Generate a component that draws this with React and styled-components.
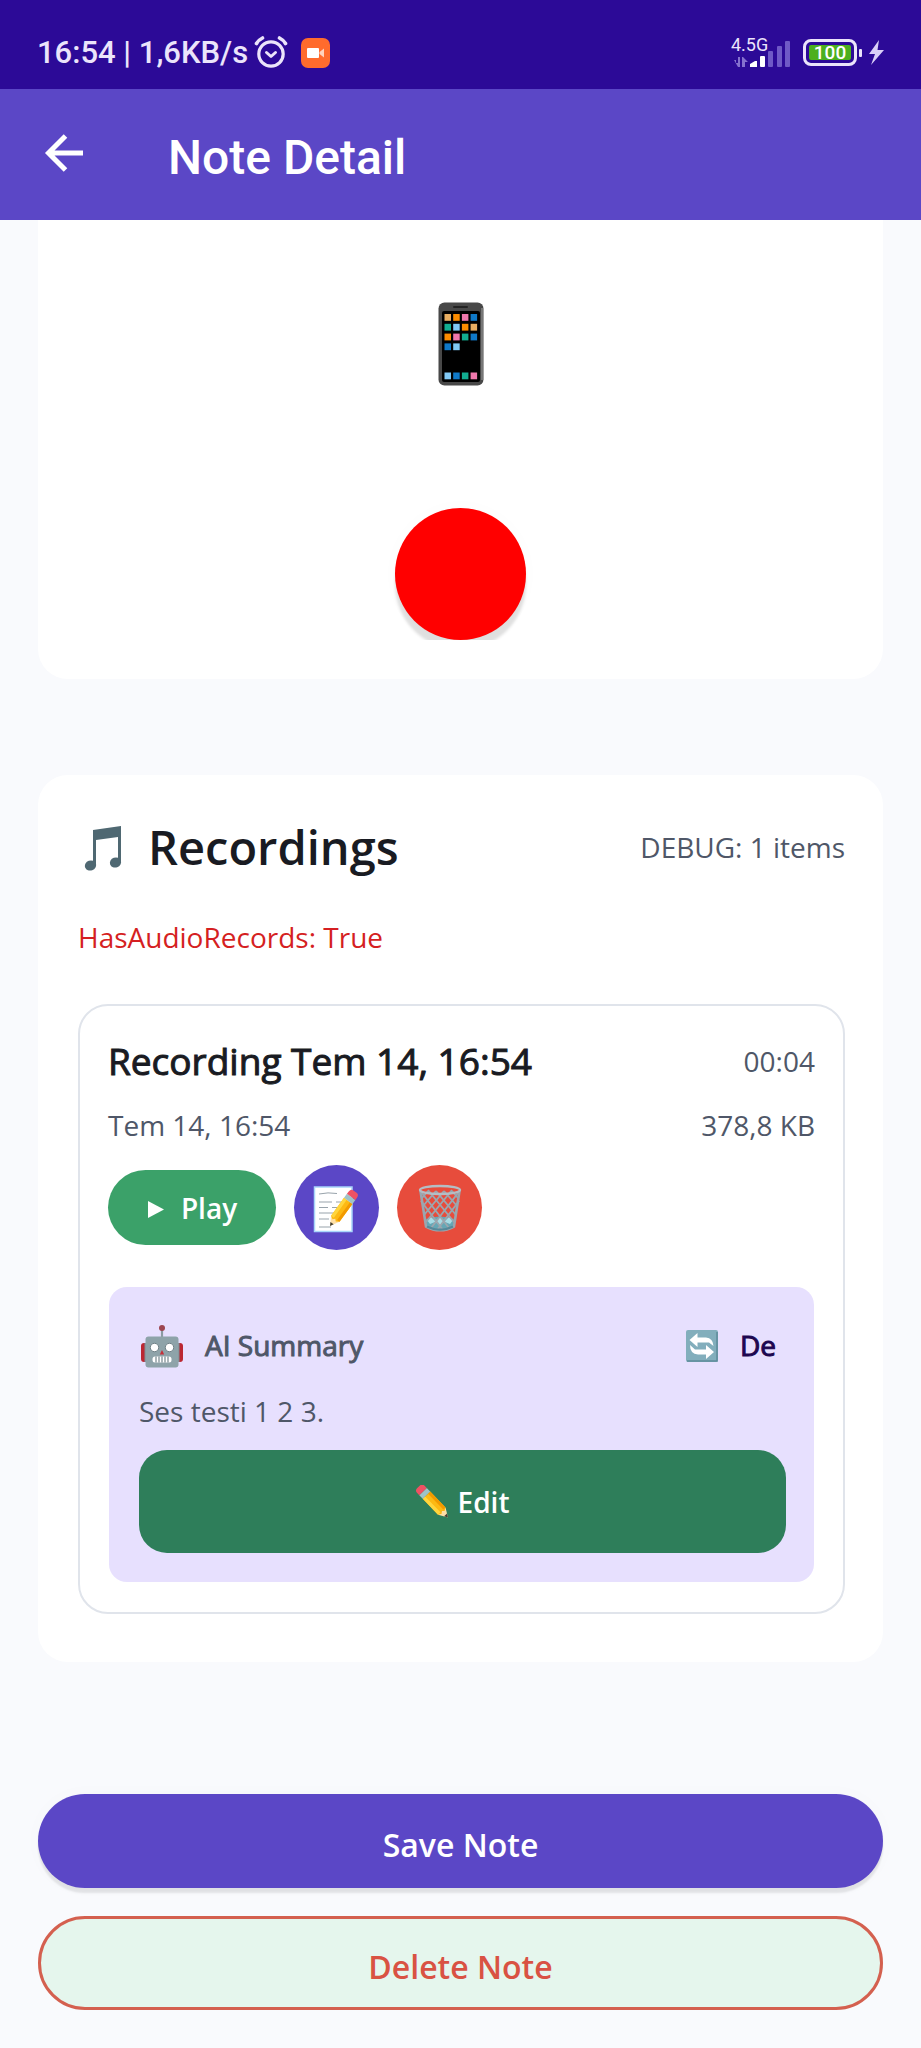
import React from 'react';
import styled, { createGlobalStyle } from 'styled-components';

const color = {
  status: '#2c0a97',
  primary: '#5b47c6',
  page: '#f9fafd',
  ink: '#191b22',
  muted: '#4f5768',
  danger: '#e74c3c',
};

const GlobalStyle = createGlobalStyle`
  *, *::before, *::after { box-sizing: border-box; }
  body {
    margin: 0;
    background: ${color.page};
    font-family: "Open Sans", "Noto Sans", sans-serif;
    color: ${color.ink};
  }
  h1, h2, h3, p { margin: 0; }
  button { font-family: inherit; border: 0; padding: 0; cursor: pointer; }
  svg { display: block; flex: none; }
`;

const StatusBar = styled.div`
  display: flex;
  justify-content: space-between;
  height: 89px;
  padding: 16px 36px 0 37px;
  background: ${color.status};
  color: #ebe4fb;
  font-family: Roboto, sans-serif;
`;

const StatusGroup = styled.div`
  display: flex;
  align-items: center;
  gap: 6px;
`;

const StatusIcons = styled(StatusGroup)`
  gap: 13px;
`;

const Clock = styled.span`
  font-size: 31px;
  line-height: 40px;
  font-weight: 500;
`;

const Signal = styled.div`
  position: relative;
  margin-right: 6px;
`;

const NetworkLabel = styled.span`
  position: absolute;
  left: 0;
  top: 0;
  font-size: 18px;
  line-height: 16px;
`;

const Battery = styled.div`
  display: flex;
  align-items: center;
  gap: 2px;
  &::after {
    content: '';
    width: 3px;
    height: 8px;
    border-radius: 1px;
    background: #ebe4fb;
  }
`;

const BatteryShell = styled.div`
  width: 54px;
  height: 27px;
  padding: 3px;
  border: 3px solid #ebe4fb;
  border-radius: 8px;
`;

const BatteryLevel = styled.div`
  height: 15px;
  border-radius: 2px;
  background: #4caf1e;
  color: #fff;
  font-size: 19px;
  line-height: 16px;
  font-weight: 500;
  text-align: center;
`;

const AppBar = styled.header`
  display: flex;
  align-items: center;
  gap: 78px;
  height: 131px;
  padding: 0 38px;
  background: ${color.primary};
  color: #fff;
`;

const BackButton = styled.button`
  background: none;
  color: inherit;
  padding: 0 0 4px;
`;

const ScreenTitle = styled.h1`
  font-family: Roboto, sans-serif;
  font-size: 48px;
  line-height: 56px;
  font-weight: 500;
  padding-top: 6px;
`;

const Content = styled.main`
  padding: 0 38px 38px;
`;

const RecorderCard = styled.section`
  display: flex;
  flex-direction: column;
  align-items: center;
  padding: 82px 40px 39px;
  background: #fff;
  border-radius: 0 0 30px 30px;
`;

const RecordSlot = styled.div`
  display: flex;
  justify-content: center;
  width: 180px;
  padding-top: 24px;
  margin-top: 98px;
  overflow: hidden;
`;

const RecordButton = styled.button`
  width: 131px;
  height: 132px;
  border-radius: 50%;
  background: #f00;
  box-shadow: 0 10px 3px rgba(0, 0, 0, 0.12), 0 0 18px rgba(0, 0, 0, 0.02);
`;

const RecordingsCard = styled.section`
  margin-top: 96px;
  padding: 40px 38px 48px 40px;
  background: #fff;
  border-radius: 30px;
`;

const Row = styled.div`
  display: flex;
  align-items: center;
  justify-content: space-between;
`;

const TitleGroup = styled.div`
  display: flex;
  align-items: center;
  gap: ${(p) => p.$gap || 20}px;
`;

const SectionTitle = styled.h2`
  font-size: 47px;
  line-height: 64px;
  font-weight: 600;
`;

const Caption = styled.p`
  font-size: 28px;
  line-height: 40px;
  color: ${(p) => p.$color || color.muted};
`;

const DebugFlag = styled(Caption)`
  margin-top: 38px;
`;

const Recording = styled.article`
  margin-top: 47px;
  padding: 28px 28px 30px;
  border: 2px solid #e0e4eb;
  border-radius: 30px;
`;

const RecordingTitle = styled.h3`
  font-size: 37px;
  line-height: 54px;
  font-weight: 400;
  -webkit-text-stroke: 1px currentColor;
`;

const MetaRow = styled(Row)`
  margin-top: 17px;
`;

const Actions = styled.div`
  display: flex;
  align-items: center;
  gap: 18px;
  margin-top: 20px;
`;

const PlayButton = styled.button`
  display: flex;
  align-items: center;
  justify-content: center;
  gap: 16px;
  width: 168px;
  height: 75px;
  border-radius: 38px;
  background: #3ba169;
  color: #fff;
  font-size: 28px;
  line-height: 40px;
  font-weight: 600;
`;

const RoundButton = styled.button`
  display: flex;
  align-items: center;
  justify-content: center;
  width: 85px;
  height: 85px;
  border-radius: 50%;
  background: ${(p) => p.$bg};
`;

const Summary = styled.section`
  margin: 37px 1px 0;
  padding: 28px 28px 29px 30px;
  border-radius: 18px;
  background: #e7e0fe;
`;

const SummaryHead = styled(Row)`
  height: 60px;
  padding-right: 10px;
`;

const SummaryTitle = styled.h3`
  font-size: 28px;
  line-height: 40px;
  font-weight: 400;
  color: ${color.muted};
  -webkit-text-stroke: 1px currentColor;
`;

const TextButton = styled.button`
  display: flex;
  align-items: center;
  gap: 20px;
  background: none;
  color: #1d0750;
  font-size: 28px;
  line-height: 40px;
  -webkit-text-stroke: 1px currentColor;
`;

const SummaryText = styled(Caption)`
  margin-top: 16px;
`;

const EditButton = styled.button`
  display: flex;
  align-items: center;
  justify-content: center;
  gap: 8px;
  width: 100%;
  height: 103px;
  margin-top: 19px;
  border-radius: 28px;
  background: #2e7e5a;
  color: #fff;
  font-size: 28px;
  line-height: 40px;
  font-weight: 600;
`;

const Footer = styled.div`
  display: flex;
  flex-direction: column;
  gap: 28px;
  margin-top: 132px;
`;

const WideButton = styled.button`
  height: 94px;
  padding-top: 8px;
  border-radius: 47px;
  font-size: 32px;
  line-height: 44px;
  font-weight: 600;
`;

const SaveButton = styled(WideButton)`
  background: ${color.primary};
  color: #fff;
  box-shadow: 0 5px 2px rgba(0, 0, 0, 0.09), 0 0 20px rgba(0, 0, 0, 0.02);
`;

const DeleteButton = styled(WideButton)`
  background: #e5f6ed;
  border: 3px solid #d4604f;
  color: #d95243;
`;

const AlarmIcon = () => (
  <svg width="34" height="34" viewBox="0 0 34 34" fill="none" stroke="#ebe4fb" strokeLinecap="round">
    <circle cx="17" cy="18" r="12.2" strokeWidth="3.2" />
    <path d="M12.5 16.5 17 20.5 21.5 16.5" strokeWidth="3" strokeLinejoin="round" />
    <path d="M2.500 7.500Q4.500 4 8.500 2M31.500 7.500Q29.500 4 25.500 2" strokeWidth="3.600" />
  </svg>
);

const CameraIcon = () => (
  <svg width="29" height="30" viewBox="0 0 29 30">
    <rect width="29" height="30" rx="7" fill="#ff6b2d" />
    <rect x="6" y="10" width="12" height="10" rx="1" fill="#fff" />
    <path d="M18.500 14 23 10.500V19.500L18.500 16z" fill="#ffd2bd" />
  </svg>
);

const SignalIcon = () => (
  <svg width="60" height="32" viewBox="0 0 60 32">
    <path d="M3 23h2v3h2v-6h2v10h-2zM11 20h1l5 5h-3v5h-3z" fill="#8571ce" />
    <path d="M19 30v-3l5-3h2v6z" fill="#fff" />
    <rect x="29" y="19" width="5" height="11" rx="1" fill="#fff" />
    <rect x="37" y="14" width="5" height="16" rx="1" fill="#6f59c6" />
    <rect x="46" y="9" width="5" height="21" rx="1" fill="#6f59c6" />
    <rect x="54" y="4" width="5" height="26" rx="1" fill="#6f59c6" />
  </svg>
);

const BoltIcon = () => (
  <svg width="17" height="25" viewBox="0 0 17 25">
    <path d="M11 0 1 14h6L3 25 16 10H9.500z" fill="#d9cff8" />
  </svg>
);

const BackIcon = () => (
  <svg width="52" height="44" viewBox="0 0 52 44" fill="none" stroke="currentColor" strokeWidth="5">
    <path d="M45 22H11M27.500 5 10.500 22 27.500 39" />
  </svg>
);

const appColors = ['#e8ae62', '#fb8c00', '#f178ad', '#0f79c8', '#12ae91', '#81c9f5'];
const apps = [[0, 1, 2, 3], [4, 5, 1, 0], [1, 2, 4, 3], [3, 5]];
const dock = [5, 3, 4, 2];

const PhoneIcon = () => (
  <svg width="46" height="84" viewBox="0 0 46 84">
    <rect x="0.500" y="0.500" width="45" height="83" rx="6" fill="#484848" />
    <rect x="43" y="6" width="2" height="72" fill="#777" />
    <rect x="15" y="4" width="15" height="2" rx="1" fill="#222" />
    <rect x="4" y="9" width="38" height="71" rx="2" fill="#000" />
    {apps.map((row, y) =>
      row.map((c, x) => (
        <rect key={`${y}${x}`} x={6.5 + x * 8.7} y={12 + y * 9.8} width="6.500" height="6.800" fill={appColors[c]} />
      ))
    )}
    {dock.map((c, x) => (
      <rect key={x} x={6.5 + x * 8.7} y="70.500" width="6.500" height="6.800" fill={appColors[c]} />
    ))}
  </svg>
);

const MusicIcon = () => (
  <svg width="47" height="48" viewBox="-5 -2 47 48" fill="#4f6872">
    <path d="M10 5 38 1V38H35V12L13 15V41H10z" />
    <ellipse cx="7.500" cy="40.500" rx="5.700" ry="5" transform="rotate(-20 7.500 40.500)" />
    <ellipse cx="32.500" cy="37.500" rx="5.700" ry="5" transform="rotate(-20 32.500 37.500)" />
  </svg>
);

const PlayIcon = () => (
  <svg width="18" height="20" viewBox="0 0 18 20">
    <path d="M1 3 17 11.500 1 20z" fill="#fff" />
  </svg>
);

const Pencil = () => (
  <g>
    <path d="M0 0 9-5.200V5.200z" fill="#ffe0a6" />
    <path d="M0 0 3.500-2V2z" fill="#454034" />
    <path d="M9-5.200H31V5.200H9L7 2 9 0 7-2z" fill="#fdb913" />
    <path d="M9-5.200H31V-1.800H9z" fill="#ffd53d" />
    <path d="M9 2.200H31V5.200H9z" fill="#f29a00" />
    <path d="M31-5.200H36V5.200H31z" fill="#9fc3c8" />
    <path d="M36-5.200H39Q42.500-5 42.500-2V2Q42.500 5 39 5.200H36z" fill="#ef5163" />
  </g>
);

const MemoIcon = () => (
  <svg width="50" height="50" viewBox="0 0 50 50">
    <rect x="2.500" y="4" width="37.500" height="44.500" fill="#fff" stroke="#a8d5fa" strokeWidth="1.500" />
    <path
      d="M7 11q9-2 18-.500M7 19h13m4 0h7M7 24.500h9m4 0h7M7 30h18M7 36h10M7 44h12"
      fill="none"
      stroke="#98a3ab"
      strokeWidth="1"
    />
    <g transform="translate(18 43) rotate(-54)">
      <Pencil />
    </g>
  </svg>
);

const TrashIcon = () => (
  <svg width="44" height="50" viewBox="0 0 44 50">
    <path d="M8 36Q22 31 36 36L35 44Q22 51 9 44z" fill="#65a7b5" />
    <path d="M9 37l4-3 4 4 5-4 5 4 4-4 4 3-3 4-5-2-5 3-5-3-5 2z" fill="#a7dce5" />
    <path
      d="M4 10 31 45M3 18 25 47M10 7 36 39M18 8 38 32M26 8 39 23M34 8 40 15M40 10 13 45M41 18 19 47M34 7 8 39M26 8 6 32M18 8 5 23M10 8 4 15"
      fill="none"
      stroke="#9ba6ae"
      strokeWidth="1.900"
    />
    <path d="M2.500 8 8 43.500Q22 51 36 43.500L41.500 8" fill="none" stroke="#9ba6ae" strokeWidth="2.600" />
    <ellipse cx="22" cy="7" rx="20" ry="4" fill="none" stroke="#b4bdc4" strokeWidth="2.400" />
    <path d="M9 43.500Q22 50 35 43.500" fill="none" stroke="#56899a" strokeWidth="2" />
  </svg>
);

const RobotIcon = () => (
  <svg width="46" height="46" viewBox="0 -2 46 46">
    <rect x="2" y="19" width="7" height="19" rx="3" fill="#bb2732" />
    <rect x="37" y="19" width="7" height="19" rx="3" fill="#bb2732" />
    <path d="M5.500 19h2v19h-2zM38.500 19h2v19h-2z" fill="#7f8b92" />
    <path d="M23 14V5" stroke="#8b9ba2" strokeWidth="2.200" />
    <circle cx="23" cy="4" r="3" fill="#9d4650" />
    <rect x="6.500" y="12.500" width="33" height="31" rx="3" fill="#8ea3a9" />
    <circle cx="15.500" cy="23.500" r="4.200" fill="#fff" stroke="#708187" />
    <circle cx="30.500" cy="23.500" r="4.200" fill="#fff" stroke="#708187" />
    <path d="M23 26 25.200 30.500H20.800z" fill="#c62f38" />
    <rect x="13.500" y="32.500" width="19" height="6" rx="2.500" fill="#fff" />
    <path d="M17 32.500v6M20 32.500v6M23 32.500v6M26 32.500v6M29 32.500v6" stroke="#75868c" strokeWidth="1.200" />
  </svg>
);

const RefreshIcon = () => (
  <svg width="36" height="36" viewBox="0 -1 36 36">
    <rect x="2" y="2" width="32" height="32" rx="2" fill="#82aebc" />
    <path d="M3 33h30v-29" fill="none" stroke="#5f8c9b" strokeWidth="1.500" />
    <path d="M5.500 12 13.500 5V9.500H22Q29 10 29.500 18L25 14.500H13.500V19z" fill="#fff" />
    <path d="M30 24 22 31V26.500H14Q6 26 6 17L11 21.500H22V17z" fill="#fff" />
  </svg>
);

const PencilIcon = () => (
  <svg width="34" height="34" viewBox="0 0 34 34">
    <g transform="translate(32 32.500) rotate(-134)">
      <Pencil />
    </g>
  </svg>
);

export default function App() {
  return (
    <>
      <GlobalStyle />
      <StatusBar>
        <StatusGroup>
          <Clock>16:54 | 1,6KB/s</Clock>
          <StatusIcons>
            <AlarmIcon />
            <CameraIcon />
          </StatusIcons>
        </StatusGroup>
        <StatusGroup>
          <Signal>
            <SignalIcon />
            <NetworkLabel>4.5G</NetworkLabel>
          </Signal>
          <Battery>
            <BatteryShell>
              <BatteryLevel>100</BatteryLevel>
            </BatteryShell>
          </Battery>
          <BoltIcon />
        </StatusGroup>
      </StatusBar>
      <AppBar>
        <BackButton type="button" aria-label="Back">
          <BackIcon />
        </BackButton>
        <ScreenTitle>Note Detail</ScreenTitle>
      </AppBar>
      <Content>
        <RecorderCard>
          <PhoneIcon />
          <RecordSlot>
            <RecordButton type="button" aria-label="Record" />
          </RecordSlot>
        </RecorderCard>

        <RecordingsCard>
          <Row>
            <TitleGroup $gap={23}>
              <MusicIcon />
              <SectionTitle>Recordings</SectionTitle>
            </TitleGroup>
            <Caption>DEBUG: 1 items</Caption>
          </Row>
          <DebugFlag $color="#d51f22">HasAudioRecords: True</DebugFlag>

          <Recording>
            <Row>
              <RecordingTitle>Recording Tem 14, 16:54</RecordingTitle>
              <Caption>00:04</Caption>
            </Row>
            <MetaRow>
              <Caption>Tem 14, 16:54</Caption>
              <Caption>378,8 KB</Caption>
            </MetaRow>
            <Actions>
              <PlayButton type="button">
                <PlayIcon />
                Play
              </PlayButton>
              <RoundButton type="button" aria-label="Transcribe" $bg={color.primary}>
                <MemoIcon />
              </RoundButton>
              <RoundButton type="button" aria-label="Delete recording" $bg={color.danger}>
                <TrashIcon />
              </RoundButton>
            </Actions>
            <Summary>
              <SummaryHead>
                <TitleGroup>
                  <RobotIcon />
                  <SummaryTitle>AI Summary</SummaryTitle>
                </TitleGroup>
                <TextButton type="button">
                  <RefreshIcon />
                  De
                </TextButton>
              </SummaryHead>
              <SummaryText>Ses testi 1 2 3.</SummaryText>
              <EditButton type="button">
                <PencilIcon />
                Edit
              </EditButton>
            </Summary>
          </Recording>
        </RecordingsCard>

        <Footer>
          <SaveButton type="button">Save Note</SaveButton>
          <DeleteButton type="button">Delete Note</DeleteButton>
        </Footer>
      </Content>
    </>
  );
}
